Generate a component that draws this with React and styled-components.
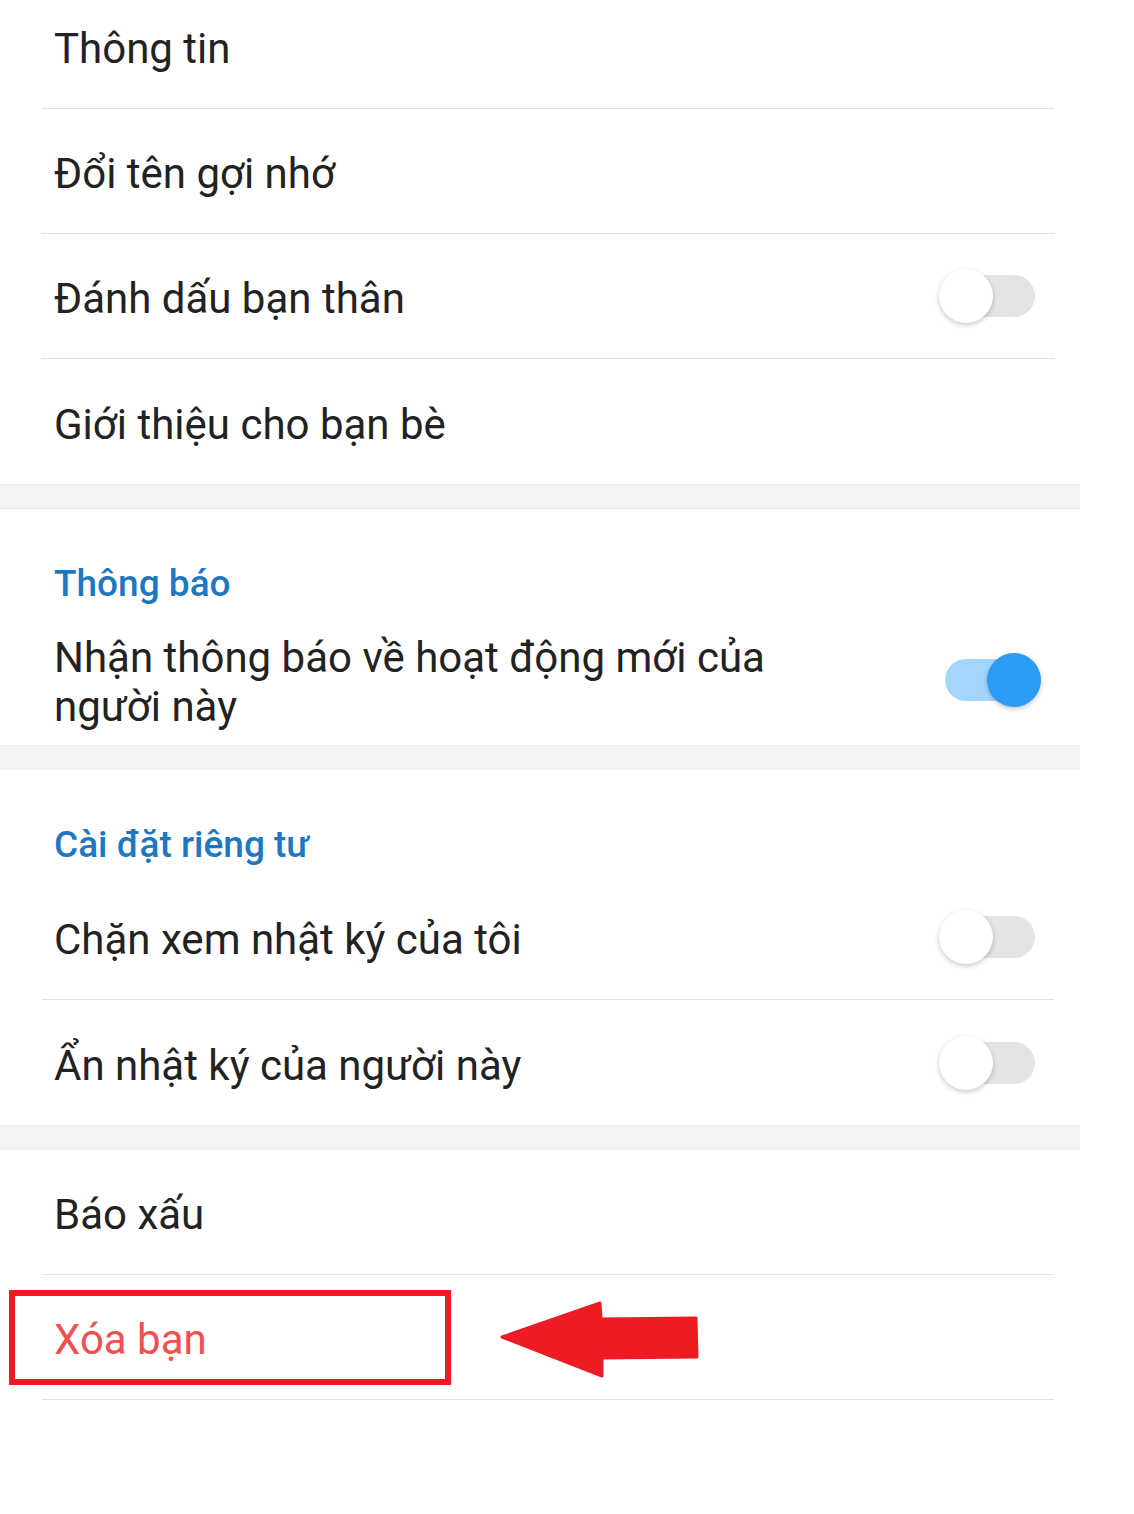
import styled, { createGlobalStyle } from "styled-components";

const GlobalStyle = createGlobalStyle`
    html, body {
        margin: 0;
        padding: 0;
        background: #ffffff;
    }
    body {
        font-family: Roboto, "Noto Sans", "Liberation Sans", sans-serif;
        color: #222222;
        overflow: hidden;
    }
`;

const Page = styled.div`
    width: 1080px;
    margin-top: -16px;
    background: #ffffff;
`;

const Section = styled.div`
    position: relative;
`;

const Band = styled.div`
    height: 23px;
    background: #f2f3f5;
    border-top: 1px solid #ebecee;
    border-bottom: 1px solid #ebecee;
`;

const Header = styled.div`
    height: 54px;
    padding: 51px 0 0 54px;
    font-size: 37px;
    font-weight: 500;
    line-height: 48px;
    color: #1f78bf;
`;

const Row = styled.div`
    position: relative;
    display: flex;
    align-items: center;
    justify-content: space-between;
    box-sizing: border-box;
    height: ${(p) => (p.$tall ? "131px" : "125px")};
    margin: 0 26px 0 42px;
    padding: ${(p) => (p.$tall ? "5px 13px 0 12px" : "5px 13px 0 12px")};
    border-bottom: ${(p) => (p.$divider ? "1px solid #e3e3e3" : "none")};
`;

const Label = styled.div`
    font-size: 42px;
    line-height: 49px;
    color: ${(p) => (p.$danger ? "#f0504f" : "#222222")};
    max-width: ${(p) => (p.$narrow ? "760px" : "none")};
`;

const Track = styled.div`
    position: relative;
    width: 90px;
    height: 42px;
    border-radius: 21px;
    margin-right: 6px;
    margin-top: -5px;
    background: ${(p) => (p.$on ? "#a6d5fb" : "#e4e4e4")};
`;

const Knob = styled.div`
    position: absolute;
    top: -6px;
    left: ${(p) => (p.$on ? "42px" : "-6px")};
    width: 54px;
    height: 54px;
    border-radius: 50%;
    background: ${(p) => (p.$on ? "#2b9bf5" : "#ffffff")};
    box-shadow: 0 2px 5px rgba(0, 0, 0, 0.22);
`;

const Toggle = ({ on }) => (
    <Track $on={on}>
        <Knob $on={on} />
    </Track>
);

const Highlight = styled.div`
    position: absolute;
    left: -33px;
    top: 15px;
    width: 430px;
    height: 83px;
    border: 6px solid #ed1c24;
`;

const Arrow = styled.svg`
    position: absolute;
    left: 456px;
    top: 25px;
`;

const App = () => {
    return (
        <>
            <GlobalStyle />
            <Page>
                <Section>
                    <Row $divider>
                        <Label>Thông tin</Label>
                    </Row>
                    <Row $divider>
                        <Label>Đổi tên gợi nhớ</Label>
                    </Row>
                    <Row $divider>
                        <Label>Đánh dấu bạn thân</Label>
                        <Toggle on={false} />
                    </Row>
                    <Row>
                        <Label>Giới thiệu cho bạn bè</Label>
                    </Row>
                </Section>
                <Band />
                <Section>
                    <Header>Thông báo</Header>
                    <Row $tall>
                        <Label $narrow>Nhận thông báo về hoạt động mới của người này</Label>
                        <Toggle on />
                    </Row>
                </Section>
                <Band />
                <Section>
                    <Header>Cài đặt riêng tư</Header>
                    <Row $divider>
                        <Label>Chặn xem nhật ký của tôi</Label>
                        <Toggle on={false} />
                    </Row>
                    <Row>
                        <Label>Ẩn nhật ký của người này</Label>
                        <Toggle on={false} />
                    </Row>
                </Section>
                <Band />
                <Section>
                    <Row $divider>
                        <Label>Báo xấu</Label>
                    </Row>
                    <Row $divider>
                        <Label $danger>Xóa bạn</Label>
                        <Highlight />
                        <Arrow width="204" height="80" viewBox="0 0 204 80">
                            <path
                                d="M4 37 L102 3 L103 19 L198 18 L199 57 L104 58 L104 76 Z"
                                fill="#ed1c24"
                                stroke="#ed1c24"
                                strokeWidth="3"
                                strokeLinejoin="round"
                            />
                        </Arrow>
                    </Row>
                </Section>
            </Page>
        </>
    );
};

export default App;
